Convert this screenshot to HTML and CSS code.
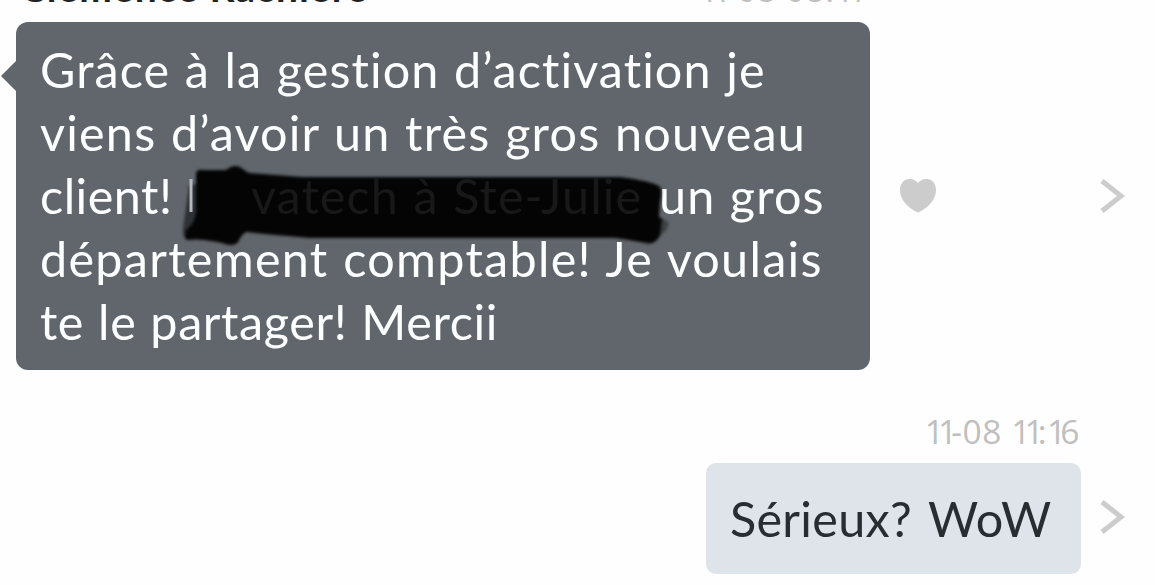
FILE: index.html
```html
<!DOCTYPE html>
<html lang="fr">
<head>
  <meta charset="UTF-8">
  <meta name="viewport" content="width=device-width, initial-scale=1.0">
  <title>Messages</title>
  <link rel="stylesheet" href="styles.css">
</head>
<body>
  <main class="chat">
    <!-- Received message -->
    <section class="message received">
      <div class="meta">
        <span class="name">Clémence Rachière</span>
        <time class="time"><span class="ones">11</span>-08 08:<span class="ones">11</span></time>
      </div>
      <div class="row">
        <div class="bubble">
          <span class="line line-1">Grâce à la gestion d’activation je</span>
          <span class="line line-2">viens d’avoir un très gros nouveau</span>
          <span class="line line-3"><span class="start">client!</span><span class="hidden">vatech à Ste-Julie</span><span class="end">un gros</span></span>
          <span class="line line-4">département comptable! Je voulais</span>
          <span class="line line-5">te le partager! Mercii</span>
          <svg class="marker" width="510" height="100" viewBox="175 155 510 100">
            <defs>
              <filter id="soft" color-interpolation-filters="sRGB"><feGaussianBlur stdDeviation="1.8"/></filter>
            </defs>
            <g filter="url(#soft)">
              <path d="M189 186L196 184V238L188 240Q182 238 183 228Z" fill="#25282b" opacity=".85"/>
              <path d="M196 173Q197 169 203 170L226 170Q236 162 244 170L249 173Q275 175 302 177L620 177Q651 181 659 186Q663 189 660 202L659 217Q665 219 665 224Q665 232 661 234Q655 246 646 243Q624 239 615 238L310 238Q275 235 246 232Q240 236 239 241Q234 248 222 243Q200 238 187 240Q184 239 186 230Q194 225 196 213Z" fill="#040404"/>
              <path d="M662 218L669 223L666 231L660 235Z" fill="#3c4043"/>
            </g>
            <path d="M191 179V212" stroke="#b5b9bc" stroke-width="3"/>
          </svg>
        </div>
        <svg class="heart" width="36" height="34" viewBox="0 0 36 34">
          <path d="M18 4C15 .5 12 0 9.500 0C4 0 0 4.500 0 11C0 21 8 29 18 33.500C28 29 36 21 36 11C36 4.500 32 0 26.500 0C24 0 21 .5 18 4Z" fill="#ccc"/>
        </svg>
        <svg class="chevron" width="26" height="36" viewBox="0 0 26 36">
          <path d="M2 3L21 18L2 33" fill="none" stroke="#ccc" stroke-width="5"/>
        </svg>
      </div>
    </section>

    <!-- Sent message -->
    <section class="message sent">
      <time class="time"><span class="ones">11</span>-08 <span class="ones">11</span>:<span class="ones">1</span>6</time>
      <div class="row">
        <div class="bubble">Sérieux? WoW</div>
        <svg class="chevron" width="26" height="36" viewBox="0 0 26 36">
          <path d="M2 3L21 18L2 33" fill="none" stroke="#ccc" stroke-width="5"/>
        </svg>
      </div>
    </section>
  </main>
</body>
</html>
```
FILE: styles.css
```css
body {
  margin: 0;
  background: #fefefe;
  font-family: Lato, "Open Sans", sans-serif;
  font-variant-ligatures: none;
}
.chat {
  width: 1155px;
  height: 585px;
  overflow: hidden;
}
.row {
  display: flex;
  align-items: center;
}
.time {
  color: #bfbfbf;
  font-family: "Open Sans", sans-serif;
  font-size: 33.5px;
  line-height: 40px;
  letter-spacing: 0.6px;
}
.ones {
  letter-spacing: -6px;
}

/* Received message */
.meta {
  display: flex;
  justify-content: space-between;
  align-items: baseline;
  width: 841px;
  height: 55px;
  margin-top: -33px;
  padding-left: 20px;
}
.name {
  color: #222;
  font-size: 39px;
  font-weight: bold;
  line-height: 40px;
  letter-spacing: 1px;
}
.received .bubble {
  position: relative;
  box-sizing: border-box;
  width: 854px;
  height: 348px;
  margin-left: 16px;
  padding: 16px 24px;
  border-radius: 12px;
  background: #61666c;
  color: #fcfeff;
  font-size: 48.5px;
  word-spacing: 1px;
}
.received .bubble::before {
  content: "";
  position: absolute;
  left: -15px;
  top: 39px;
  border: 15px solid transparent;
  border-left: 0;
  border-right-color: #61666c;
}
.line {
  display: block;
  height: 63px;
  line-height: 63px;
  white-space: nowrap;
}
.line-1 {
  letter-spacing: 1.1px;
}
.line-2 {
  letter-spacing: 1.2px;
}
.line-3 {
  display: flex;
  letter-spacing: 1.1px;
}
.line-4 {
  letter-spacing: 1.3px;
}
.line-5 {
  letter-spacing: 0.6px;
}
.start {
  width: 211px;
  letter-spacing: 0.5px;
}
.hidden {
  position: relative;
  z-index: 2;
  width: 408px;
  color: #191819;
}
.marker {
  position: absolute;
  left: 159px;
  top: 133px;
}
.heart {
  margin-left: 30px;
}
.received .chevron {
  margin-left: 164px;
}

/* Sent message */
.sent {
  display: flex;
  flex-direction: column;
  align-items: flex-end;
  padding-top: 41px;
}
.sent .time {
  margin-right: 75px;
}
.sent .row {
  margin: 12px 29px 0 0;
}
.sent .bubble {
  box-sizing: border-box;
  width: 375px;
  height: 111px;
  padding-left: 24px;
  border-radius: 10px;
  background: #dfe4ea;
  color: #272d31;
  font-size: 48.5px;
  line-height: 110px;
  letter-spacing: 0.3px;
  word-spacing: 4px;
  white-space: nowrap;
}
.sent .chevron {
  margin: 0 0 3px 19px;
}
```
